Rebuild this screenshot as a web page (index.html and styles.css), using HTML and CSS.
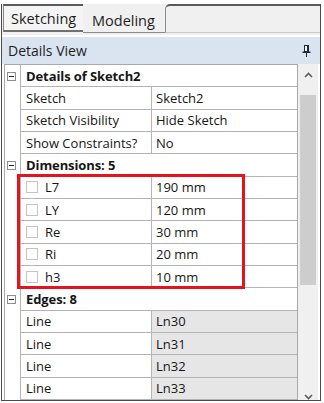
FILE: index.html
```html
<!DOCTYPE html>
<html>
<head>
<meta charset="utf-8">
<link rel="stylesheet" href="styles.css">
</head>
<body>
<div class="win">
  <div class="tabs">
    <div class="tab tab-s">Sketching</div>
    <div class="tab tab-m">Modeling</div>
    <div class="tab-fill"></div>
  </div>
  <div class="hdr">
    <span>Details View</span>
    <svg class="pin" width="9" height="12" viewBox="0 0 9 12"><rect x="2.5" y="0.5" width="4" height="6" fill="#fff" stroke="#1d2846"/><rect x="5" y="1" width="1.5" height="5" fill="#1d2846"/><rect x="0.5" y="6.5" width="8" height="1.5" fill="#1d2846"/><rect x="4" y="8" width="1" height="4" fill="#1d2846"/></svg>
  </div>
  <div class="body">
    <div class="grid">
      <div class="row"><div class="gut"><span class="tog"></span></div><div class="cat">Details of Sketch2</div></div>
      <div class="row"><div class="gut"></div><div class="name">Sketch</div><div class="val">Sketch2</div></div>
      <div class="row"><div class="gut"></div><div class="name">Sketch Visibility</div><div class="val">Hide Sketch</div></div>
      <div class="row"><div class="gut"></div><div class="name">Show Constraints?</div><div class="val">No</div></div>
      <div class="row"><div class="gut"><span class="tog"></span></div><div class="cat">Dimensions: 5</div></div>
      <div class="row"><div class="gut"></div><div class="name"><span class="chk"></span>L7</div><div class="val">190 mm</div></div>
      <div class="row"><div class="gut"></div><div class="name"><span class="chk"></span>LY</div><div class="val">120 mm</div></div>
      <div class="row"><div class="gut"></div><div class="name"><span class="chk"></span>Re</div><div class="val">30 mm</div></div>
      <div class="row"><div class="gut"></div><div class="name"><span class="chk"></span>Ri</div><div class="val">20 mm</div></div>
      <div class="row"><div class="gut"></div><div class="name"><span class="chk"></span>h3</div><div class="val">10 mm</div></div>
      <div class="row"><div class="gut"><span class="tog"></span></div><div class="cat">Edges: 8</div></div>
      <div class="row"><div class="gut"></div><div class="name">Line</div><div class="val ro">Ln30</div></div>
      <div class="row"><div class="gut"></div><div class="name">Line</div><div class="val ro">Ln31</div></div>
      <div class="row"><div class="gut"></div><div class="name">Line</div><div class="val ro">Ln32</div></div>
      <div class="row"><div class="gut"></div><div class="name">Line</div><div class="val ro">Ln33</div></div>
      <div class="mark"></div>
    </div>
    <div class="sb">
      <div class="sb-btn"><svg width="9" height="6" viewBox="0 0 9 6"><polyline points="1,5 4.5,1.5 8,5" fill="none" stroke="#5a5a5a" stroke-width="1.6"/></svg></div>
      <div class="sb-thumb"></div>
      <div class="sb-down"><svg width="9" height="6" viewBox="0 0 9 6"><polyline points="1,1 4.5,4.5 8,1" fill="none" stroke="#5a5a5a" stroke-width="1.6"/></svg></div>
    </div>
  </div>
</div>
</body>
</html>
```
FILE: styles.css
```css
html, body {
  margin: 0;
  padding: 0;
  background: #fff;
}
body {
  font-family: "Open Sans", "Noto Sans", sans-serif;
  font-size: 13px;
  color: #161616;
  width: 324px;
  height: 403px;
  overflow: hidden;
}
.win {
  margin: 4px 0 0 1px;
  width: 320px;
  height: 397px;
  box-sizing: border-box;
  border: 1px solid #4a4a4a;
  border-top: none;
  display: flex;
  flex-direction: column;
  overflow: hidden;
}
.tabs {
  height: 31px;
  flex: none;
  display: flex;
  align-items: flex-start;
  background: #f0f0f0;
}
.tab {
  box-sizing: border-box;
  display: flex;
  align-items: center;
  font-size: 14.5px;
  color: #1e1e1e;
}
.tab-s {
  margin-left: 1px;
  width: 80px;
  height: 28px;
  padding-left: 7px;
  border-top: 2px solid #5a5a5a;
  border-left: 1px solid #8a8a8a;
  border-bottom: 2px solid #707070;
  background: #f4f4f4;
}
.tab-m {
  margin-top: 4px;
  width: 82px;
  height: 25px;
  padding-left: 9px;
  border-bottom: 1px solid #8a8a8a;
  background: #f0f0f0;
}
.tab-fill {
  flex: 1;
  height: 29px;
  box-sizing: border-box;
  border-top: 2px solid #5a5a5a;
  border-left: 1px solid #8a8a8a;
  border-top-left-radius: 5px;
  border-bottom: 1px solid #c8c8c8;
}
.hdr {
  margin-top: 2px;
  height: 27px;
  flex: none;
  box-sizing: border-box;
  background: #dae4f0;
  display: flex;
  align-items: center;
  justify-content: space-between;
  padding: 0 9px 0 6px;
  font-size: 14px;
  color: #1e1e1e;
}
.pin {
  display: block;
}
.body {
  flex: none;
  height: 336px;
  display: flex;
  padding-left: 2px;
  overflow: hidden;
}
.grid {
  position: relative;
  width: 294px;
  flex: none;
  box-sizing: border-box;
  border: 1px solid #a8a8a8;
  border-bottom: none;
}
.row {
  display: flex;
  height: 22.333px;
}
.gut {
  width: 15px;
  flex: none;
  display: flex;
  align-items: center;
}
.tog {
  margin-left: 2px;
  width: 9px;
  height: 9px;
  box-sizing: border-box;
  border: 1px solid #8e8e8e;
  position: relative;
  background: #fff;
}
.tog::after {
  content: "";
  position: absolute;
  left: 1px;
  top: 3px;
  width: 5px;
  height: 1px;
  background: #222;
}
.name, .val, .cat {
  box-sizing: border-box;
  border-left: 1px solid #b4b4b4;
  border-bottom: 1px solid #b4b4b4;
  display: flex;
  align-items: center;
  white-space: nowrap;
  overflow: hidden;
}
.name {
  width: 131px;
  flex: none;
  padding-left: 5px;
}
.val {
  flex: 1;
  padding-left: 4px;
}
.val.ro {
  background: #e6e6e6;
}
.cat {
  flex: 1;
  padding-left: 5px;
  font-weight: 700;
  font-size: 13px;
  letter-spacing: -0.1px;
}
.chk {
  width: 12px;
  height: 12px;
  box-sizing: border-box;
  border: 1px solid #c4c4c4;
  margin-right: 7px;
  flex: none;
}
.mark {
  position: absolute;
  left: 12px;
  top: 109px;
  width: 228px;
  height: 115px;
  box-sizing: border-box;
  border: 3px solid #e3141e;
}
.sb {
  width: 20px;
  flex: none;
  background: #f0f0f0;
  display: flex;
  flex-direction: column;
  align-items: center;
}
.sb-btn {
  height: 22px;
  flex: none;
  display: flex;
  align-items: center;
  justify-content: center;
}
.sb-thumb {
  margin-top: 9px;
  width: 16px;
  height: 190px;
  background: #cdcdcd;
}
.sb-down {
  margin-top: auto;
  height: 5px;
  display: flex;
  justify-content: center;
  align-items: flex-end;
}
.sb-down svg {
  display: block;
}
```
